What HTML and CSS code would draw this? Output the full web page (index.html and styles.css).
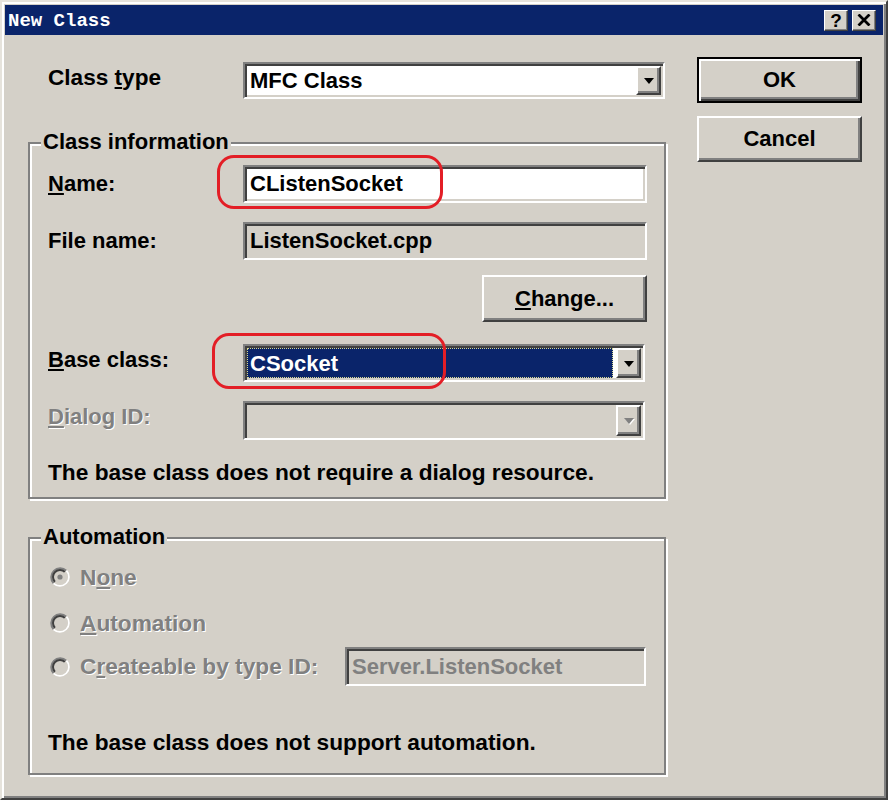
FILE: index.html
```html
<!DOCTYPE html>
<html>
<head>
<meta charset="utf-8">
<title>New Class</title>
<link rel="stylesheet" href="styles.css">
</head>
<body>
<div class="window">
  <div class="titlebar">
    <span class="title">New Class</span>
    <div class="caption-btns">
      <span class="cbtn help">?</span>
      <span class="cbtn close"><svg width="14" height="12" viewBox="0 0 14 12"><path d="M1.5 0.5 L12.5 11.5 M12.5 0.5 L1.5 11.5" stroke="#000" stroke-width="2.8"/></svg></span>
    </div>
  </div>
  <div class="client">
    <div class="main">
      <div class="toprow">
        <span class="lbl">Class <u>t</u>ype</span>
        <div class="field combo white w422">
          <span class="val">MFC Class</span>
          <span class="ddbtn"><i class="arrow"></i></span>
        </div>
      </div>

      <div class="group info">
        <div class="legend">Class information</div>
        <div class="frow r-name">
          <span class="lbl"><u>N</u>ame:</span>
          <div class="field white w404 h38"><span class="val">CListenSocket</span></div>
        </div>
        <div class="frow r-file">
          <span class="lbl">File name:</span>
          <div class="field w404 h38"><span class="val">ListenSocket.cpp</span></div>
        </div>
        <div class="frow r-change">
          <span></span>
          <div class="btn change"><span><u>C</u>hange...</span></div>
        </div>
        <div class="frow r-base">
          <span class="lbl up"><u>B</u>ase class:</span>
          <div class="field combo white w402 h38">
            <span class="sel">CSocket</span>
            <span class="ddbtn"><i class="arrow"></i></span>
          </div>
        </div>
        <div class="frow r-dlg">
          <span class="lbl dis up"><u>D</u>ialog ID:</span>
          <div class="field combo w402 h39">
            <span class="val"></span>
            <span class="ddbtn"><i class="arrow dis-arrow"></i></span>
          </div>
        </div>
        <div class="note">The base class does not require a dialog resource.</div>
      </div>

      <div class="group auto">
        <div class="legend">Automation</div>
        <div class="rrow r1">
          <svg class="radio" width="20" height="20" viewBox="0 0 20 20">
            <circle cx="10" cy="10" r="8" fill="#d4d0c8"/>
            <path d="M3.64 16.36 A9 9 0 0 1 16.36 3.64" fill="none" stroke="#808080" stroke-width="2"/>
            <path d="M16.36 3.64 A9 9 0 0 1 3.64 16.36" fill="none" stroke="#ffffff" stroke-width="2"/>
            <path d="M5.05 14.95 A7 7 0 0 1 14.95 5.05" fill="none" stroke="#404040" stroke-width="2"/>
            <path d="M14.95 5.05 A7 7 0 0 1 5.05 14.95" fill="none" stroke="#d4d0c8" stroke-width="2"/>
            <circle cx="10" cy="10" r="2.6" fill="#808080"/>
          </svg>
          <span class="dis">N<u>o</u>ne</span>
        </div>
        <div class="rrow r2">
          <svg class="radio" width="20" height="20" viewBox="0 0 20 20">
            <circle cx="10" cy="10" r="8" fill="#d4d0c8"/>
            <path d="M3.64 16.36 A9 9 0 0 1 16.36 3.64" fill="none" stroke="#808080" stroke-width="2"/>
            <path d="M16.36 3.64 A9 9 0 0 1 3.64 16.36" fill="none" stroke="#ffffff" stroke-width="2"/>
            <path d="M5.05 14.95 A7 7 0 0 1 14.95 5.05" fill="none" stroke="#404040" stroke-width="2"/>
            <path d="M14.95 5.05 A7 7 0 0 1 5.05 14.95" fill="none" stroke="#d4d0c8" stroke-width="2"/>
          </svg>
          <span class="dis"><u>A</u>utomation</span>
        </div>
        <div class="rrow r3">
          <svg class="radio" width="20" height="20" viewBox="0 0 20 20">
            <circle cx="10" cy="10" r="8" fill="#d4d0c8"/>
            <path d="M3.64 16.36 A9 9 0 0 1 16.36 3.64" fill="none" stroke="#808080" stroke-width="2"/>
            <path d="M16.36 3.64 A9 9 0 0 1 3.64 16.36" fill="none" stroke="#ffffff" stroke-width="2"/>
            <path d="M5.05 14.95 A7 7 0 0 1 14.95 5.05" fill="none" stroke="#404040" stroke-width="2"/>
            <path d="M14.95 5.05 A7 7 0 0 1 5.05 14.95" fill="none" stroke="#d4d0c8" stroke-width="2"/>
          </svg>
          <span class="dis r3lbl">C<u>r</u>eateable by type ID:</span>
          <div class="field w301 h39"><span class="val grayval">Server.ListenSocket</span></div>
        </div>
        <div class="note auto-note">The base class does not support automation.</div>
      </div>
    </div>

    <div class="side">
      <div class="btn default"><span>OK</span></div>
      <div class="btn"><span>Cancel</span></div>
    </div>
  </div>

  <div class="mark mark-name"></div>
  <div class="mark mark-base"></div>
</div>
</body>
</html>
```

FILE: styles.css
```css
* { box-sizing: border-box; }
html, body { margin: 0; padding: 0; }
body {
  width: 888px;
  height: 800px;
  overflow: hidden;
  background: #d4d0c8;
  font-family: "Liberation Sans", Arial, sans-serif;
  font-size: 22px;
  font-weight: bold;
  color: #000;
}
u { text-decoration-thickness: 2px; text-underline-offset: 2px; }

.window {
  position: relative;
  width: 888px;
  height: 800px;
  background: #d4d0c8;
  border: 2px solid;
  border-color: #e6e3dc #404040 #404040 #e6e3dc;
  box-shadow: inset 2px 2px #ffffff, inset -2px -2px #808080;
  padding: 3px;
}

.titlebar {
  height: 30px;
  background: #0a246a;
  display: flex;
  align-items: center;
  justify-content: space-between;
  padding: 0 7px 0 3px;
}
.title {
  font-family: "Liberation Mono", monospace;
  font-size: 19px;
  font-weight: bold;
  color: #fff;
  line-height: 30px;
  padding-top: 1px;
}
.caption-btns { display: flex; gap: 4px; }
.cbtn {
  width: 24px;
  height: 21px;
  background: #d4d0c8;
  border: 1px solid;
  border-color: #fff #404040 #404040 #fff;
  box-shadow: inset -1px -1px #808080;
  display: flex;
  align-items: center;
  justify-content: center;
  font-size: 19px;
  line-height: 1;
}

.client { display: flex; padding: 22px 0 0 23px; }
.main { width: 638px; }
.side {
  margin-left: 31px;
  width: 165px;
  display: flex;
  flex-direction: column;
  gap: 13px;
}

.toprow {
  margin-top: 5px;
  display: grid;
  grid-template-columns: 195px 422px;
  align-items: center;
  padding-left: 20px;
  height: 37px;
}
.toprow .lbl { margin-top: -5px; font-size: 22.6px; }
.lbl.up { margin-top: -7px; }

/* sunken fields */
.field {
  display: flex;
  align-items: center;
  background: #d4d0c8;
  border: 2px solid;
  border-color: #808080 #ffffff #ffffff #808080;
  box-shadow: inset 2px 2px #404040, inset -2px -2px #d4d0c8;
  padding: 2px;
  height: 37px;
}
.field.white { background: #fff; }
.field .val { flex: 1; padding-left: 3px; white-space: nowrap; }
.w422 { width: 422px; }
.w404 { width: 404px; }
.w402 { width: 402px; }
.w301 { width: 301px; }
.h38 { height: 38px; }
.h39 { height: 39px; }
.grayval { color: #808080; }

.ddbtn {
  width: 25px;
  height: 100%;
  background: #d4d0c8;
  border: 2px solid;
  border-color: #ffffff #404040 #404040 #ffffff;
  box-shadow: inset -2px -2px #808080;
  display: flex;
  align-items: center;
  justify-content: center;
  flex: none;
}
.arrow {
  display: block;
  width: 0;
  height: 0;
  border-left: 5px solid transparent;
  border-right: 5px solid transparent;
  border-top: 6px solid #000;
  margin-top: 1px;
}
.arrow.dis-arrow {
  border-top-color: #808080;
  filter: drop-shadow(1px 1px 0 #fff);
}

.sel {
  flex: 1;
  height: 100%;
  background: #0a246a;
  color: #fff;
  border: 1px dotted #d8d890;
  padding-left: 2px;
  padding-top: 2px;
  margin-right: 3px;
  display: flex;
  align-items: center;
}

/* group boxes */
.group {
  border: 2px solid #808080;
  box-shadow: inset 2px 2px #ffffff, 2px 2px #ffffff;
  padding: 0 17px 0 18px;
}
.legend {
  width: fit-content;
  margin: -14px 0 0 -7px;
  padding: 0 2px;
  background: #d4d0c8;
  line-height: 24px;
}
.info { margin-top: 43px; padding-bottom: 13px; }
.auto { margin-top: 38px; padding-bottom: 19px; }

.frow {
  display: grid;
  grid-template-columns: 195px 404px;
  align-items: center;
}
.r-name { margin-top: 11px; }
.r-file { margin-top: 19px; }
.r-change { margin-top: 15px; }
.r-base { margin-top: 22px; }
.r-dlg { margin-top: 19px; }
.note { margin-top: 20px; line-height: 24px; white-space: nowrap; font-size: 22.7px; }
.auto-note { margin-top: 44px; }

.dis { color: #808080; text-shadow: 1px 1px 0 #fff; }
.rrow .dis { font-size: 22.7px; }

.rrow { display: flex; align-items: center; height: 38px; }
.r1 { margin-top: 9px; }
.r2 { margin-top: 8px; }
.r3 { margin-top: 5px; height: 39px; }
.radio { flex: none; margin-left: 2px; margin-right: 10px; }
.r3lbl { flex: 0 0 255px; white-space: nowrap; }
.r3 .field { margin-left: 10px; }

/* buttons */
.btn {
  height: 46px;
  background: #d4d0c8;
  border: 2px solid;
  border-color: #ffffff #404040 #404040 #ffffff;
  box-shadow: inset -2px -2px #808080;
  display: flex;
  align-items: center;
  justify-content: center;
}
.btn.default {
  border-color: #000;
  box-shadow: inset 2px 2px #ffffff, inset -2px -2px #404040, inset -4px -4px #808080;
}
.btn.change { width: 165px; height: 47px; justify-self: end; }

/* red annotations */
.mark {
  position: absolute;
  border: 3px solid #e31e26;
  border-radius: 17px;
  pointer-events: none;
}
.mark-name { left: 215px; top: 153px; width: 226px; height: 54px; }
.mark-base { left: 210px; top: 331px; width: 234px; height: 56px; }
```
